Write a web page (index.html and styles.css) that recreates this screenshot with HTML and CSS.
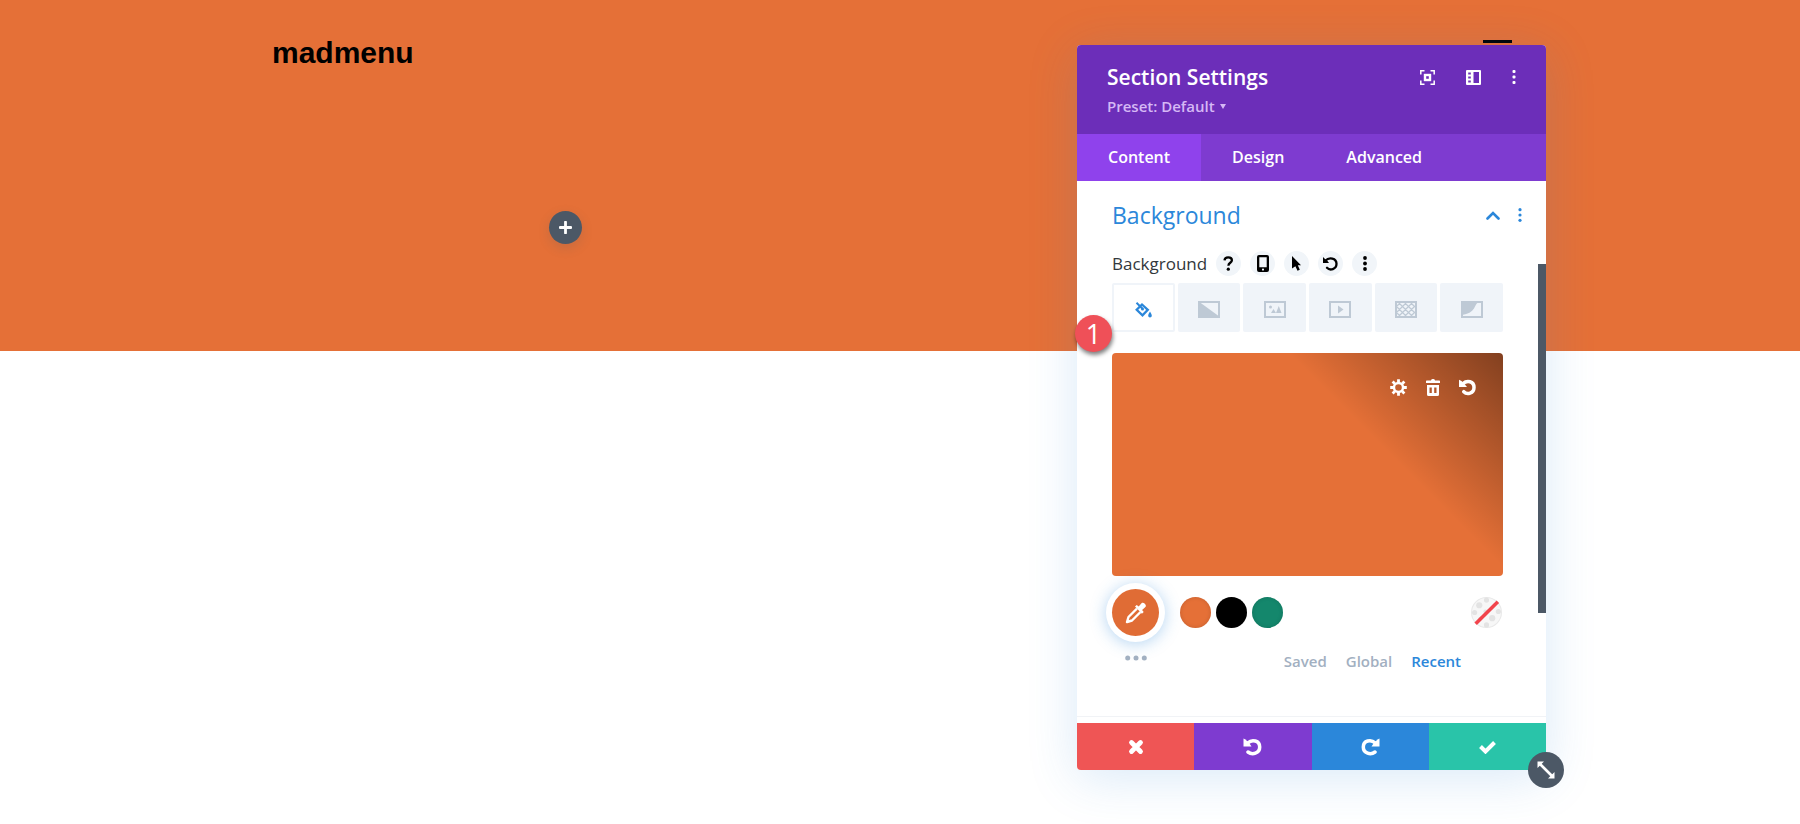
FILE: index.html
```
<!DOCTYPE html>
<html lang="en">
<head>
    <meta charset="UTF-8">
    <meta name="viewport" content="width=device-width, initial-scale=1.0">
    <title>madmenu</title>
    <link rel="stylesheet" href="styles.css">
</head>
<body>
    <section class="hero">
        <header class="topbar">
            <a class="logo" href="#">madmenu</a>
            <button class="hamburger" aria-label="Menu"></button>
        </header>
        <div class="columns">
            <div class="column">
                <button class="add" aria-label="Add module">
                    <svg width="13" height="13" viewBox="0 0 12 12"><path d="M6 1v10M1 6h10" stroke="#fff" stroke-width="2.6" stroke-linecap="round"/></svg>
                </button>
            </div>
        </div>
    </section>

    <div class="modal">
        <div class="modal-header">
            <div>
                <h2 class="modal-title">Section Settings</h2>
                <button class="preset">Preset: Default <svg width="6" height="5" viewBox="0 0 6 5"><path d="M0 0h6L3 5z" fill="currentColor"/></svg></button>
            </div>
            <div class="header-icons">
                <button class="icon" aria-label="Focus">
                    <svg width="15" height="15" viewBox="0 0 15 15" fill="none" stroke="#fff"><path d="M.8 4.5V.8h3.7M10.5 .8h3.7v3.7M14.2 10.5v3.7h-3.7M4.5 14.2H.8v-3.7" stroke-width="1.5"/><rect x="5" y="5" width="5" height="5" stroke-width="2.4"/></svg>
                </button>
                <button class="icon" aria-label="Snap to side">
                    <svg width="15" height="15" viewBox="0 0 15 15"><path fill="#fff" fill-rule="evenodd" d="M1 0h13a1 1 0 0 1 1 1v13a1 1 0 0 1-1 1H1a1 1 0 0 1-1-1V1a1 1 0 0 1 1-1zM7.5 2v11H13V2zM2.200 2.500v2h2.600v-2zM2.200 6.500v2h2.600v-2zM2.200 10.500v2h2.600v-2z"/></svg>
                </button>
                <button class="icon" aria-label="More">
                    <svg width="4" height="14" viewBox="0 0 4 14" fill="#fff"><rect x=".5" y="0" width="3" height="3" rx="1"/><rect x=".5" y="5.5" width="3" height="3" rx="1"/><rect x=".5" y="11" width="3" height="3" rx="1"/></svg>
                </button>
            </div>
        </div>

        <div class="tabs" role="tablist">
            <button class="tab active" role="tab" aria-selected="true">Content</button>
            <button class="tab" role="tab">Design</button>
            <button class="tab" role="tab">Advanced</button>
        </div>

        <div class="modal-body">
            <div class="group-head">
                <h3 class="group-title">Background</h3>
                <button class="icon" aria-label="Collapse">
                    <svg width="14" height="9" viewBox="0 0 14 9"><path d="M1.500 7.500l5.500-5.500 5.500 5.500" fill="none" stroke="#2b87da" stroke-width="2.6" stroke-linecap="round"/></svg>
                </button>
                <button class="icon" aria-label="More">
                    <svg width="4" height="14" viewBox="0 0 4 14" fill="#2b87da"><circle cx="2" cy="1.7" r="1.6"/><circle cx="2" cy="7" r="1.6"/><circle cx="2" cy="12.3" r="1.6"/></svg>
                </button>
            </div>

            <div class="field">
                <div class="field-label">
                    <span class="field-name">Background</span>
                    <button class="round" aria-label="Help">
                        <svg width="11" height="15" viewBox="0 0 11 15"><path d="M1.5 4.3C1.7 2.4 3.2 1.3 5.2 1.3c2.2 0 3.7 1.1 3.7 3 0 2.5-3.5 2.5-3.5 5.4" fill="none" stroke="#000" stroke-width="2.3"/><circle cx="5.3" cy="13.2" r="1.6"/></svg>
                    </button>
                    <button class="round" aria-label="Responsive">
                        <svg width="12" height="17" viewBox="0 0 12 17"><path fill-rule="evenodd" d="M2 0h8a2 2 0 0 1 2 2v13a2 2 0 0 1-2 2H2a2 2 0 0 1-2-2V2a2 2 0 0 1 2-2zM2.3 2.3v10h7.4v-10zM6 13.5a1.1 1.1 0 1 0 0 2.2 1.1 1.1 0 0 0 0-2.2z"/></svg>
                    </button>
                    <button class="round" aria-label="Hover">
                        <svg width="9" height="15" viewBox="0 0 9 15"><path d="M0 0l9 9.2H5.8l2 4.5-2.3 1.1-2.1-4.6L0 12.5z"/></svg>
                    </button>
                    <button class="round" aria-label="Reset">
                        <svg width="15" height="15" viewBox="0 0 15 15"><path d="M2.500 4.500C6 .8 13.500 1.800 13.500 7.800c0 5.500-6.500 7.200-9.500 4" fill="none" stroke="#000" stroke-width="2.300" stroke-linecap="round"/><path d="M0 1v6h6L4.500 5 2 3z"/></svg>
                    </button>
                    <button class="round" aria-label="Options">
                        <svg width="4" height="15" viewBox="0 0 4 15"><circle cx="2" cy="2" r="1.9"/><circle cx="2" cy="7.5" r="1.9"/><circle cx="2" cy="13" r="1.9"/></svg>
                    </button>
                </div>

                <div class="types">
                    <button class="type active" aria-label="Color">
                        <svg width="17" height="16" viewBox="0 0 17 16"><path d="M7 2.500l5.800 5.300-5.300 5.500-5.800-5.500z" fill="none" stroke="#2b87da" stroke-width="2.300"/><path d="M1.500 .8l6 6" stroke="#2b87da" stroke-width="2"/><circle cx="7.500" cy="7" r="1.500" fill="#2b87da"/><path d="M15 9.500c1 1.700 1.800 3 1.800 4.200a1.800 1.800 0 0 1-3.600 0c0-1.200.8-2.500 1.800-4.200z" fill="#2b87da"/></svg>
                    </button>
                    <button class="type" aria-label="Gradient">
                        <svg width="22" height="17" viewBox="0 0 22 17"><rect x="1" y="1" width="20" height="15" fill="none" stroke="#bec9d5" stroke-width="2"/><path d="M0 0l22 16v1H0z" fill="#bec9d5"/></svg>
                    </button>
                    <button class="type" aria-label="Image">
                        <svg width="22" height="17" viewBox="0 0 22 17"><rect x="1" y="1" width="20" height="15" fill="none" stroke="#bec9d5" stroke-width="2"/><circle cx="6.5" cy="6" r="1.5" fill="#bec9d5"/><path d="M7 12l2.5-4 2.5 4zM12 12l2.8-7L17.5 12z" fill="#bec9d5"/></svg>
                    </button>
                    <button class="type" aria-label="Video">
                        <svg width="22" height="17" viewBox="0 0 22 17"><rect x="1" y="1" width="20" height="15" fill="none" stroke="#bec9d5" stroke-width="2"/><path d="M9 4.5l5.5 4-5.5 4z" fill="#bec9d5"/></svg>
                    </button>
                    <button class="type" aria-label="Pattern">
                        <svg width="22" height="17" viewBox="0 0 22 17"><rect x="1" y="1" width="20" height="15" fill="none" stroke="#bec9d5" stroke-width="2"/><path d="M2 5l3-3M2 11l9-9M4 15L17 2M10 15l10-10M16 15l4-4M2 12l3 3M2 6l9 9M4 2l13 13M10 2l10 10M16 2l4 4" fill="none" stroke="#bec9d5" stroke-width="1.200"/></svg>
                    </button>
                    <button class="type" aria-label="Mask">
                        <svg width="22" height="17" viewBox="0 0 22 17"><rect x="1" y="1" width="20" height="15" fill="none" stroke="#bec9d5" stroke-width="2"/><path d="M1 1h18c-3.500 0-4 3-6 6.500S7 13 1 14z" fill="#bec9d5"/></svg>
                    </button>
                </div>

                <div class="preview">
                    <button class="icon" aria-label="Edit color">
                        <svg width="17" height="17" viewBox="0 0 17 17" fill="none" stroke="#fff"><circle cx="8.5" cy="8.5" r="4.5" stroke-width="2.4"/><path d="M8.5 .2v3M8.5 13.800v3M.2 8.500h3M13.800 8.500h3M2.600 2.600l2.200 2.200M12.200 12.200l2.200 2.200M2.600 14.400l2.200-2.200M12.200 4.800l2.200-2.200" stroke-width="2.800"/></svg>
                    </button>
                    <button class="icon" aria-label="Delete color">
                        <svg width="14" height="17" viewBox="0 0 14 17" fill="#fff"><path d="M5 1.500A1.500 1.500 0 0 1 6.500 0h1A1.500 1.500 0 0 1 9 1.500h4.300a.7.7 0 0 1 .7.700V4H0V2.200a.7.7 0 0 1 .7-.700z"/><path fill-rule="evenodd" d="M1 6h12v9.500a1.500 1.500 0 0 1-1.500 1.500h-9A1.500 1.500 0 0 1 1 15.500zM3.500 8.500V14H5.800V8.500zM8.200 8.500V14h2.300V8.500z"/></svg>
                    </button>
                    <button class="icon" aria-label="Reset color">
                        <svg width="17" height="17" viewBox="0 0 17 17"><path d="M4 4.5C8 1 15 2 15 8.5c0 6-7 7.500-10.200 4.200" fill="none" stroke="#fff" stroke-width="3.500" stroke-linecap="round"/><path d="M0 .8V8h8L6 5.500 2.500 2z" fill="#fff"/></svg>
                    </button>
                </div>

                <div class="palette">
                    <div class="picker">
                        <button class="picker-button" aria-label="Pick a color">
                            <svg width="22" height="22" viewBox="0 0 22 22"><path d="M12 6.5L3.500 15 2 20l5-1.500L15.500 10" fill="none" stroke="#fff" stroke-width="2.400" stroke-linejoin="round"/><path d="M10 4.500l1.700-1.600 2 1.600 2.800-3.300c1.700-1.700 5.800 1.500 3.900 3.900l-3.300 3 1.600 1.900-1.800 1.800z" fill="#fff"/></svg>
                        </button>
                        <button class="icon" aria-label="More colors">
                            <svg width="22" height="6" viewBox="0 0 22 6" fill="#a2b0c1"><circle cx="2.7" cy="3" r="2.500"/><circle cx="11" cy="3" r="2.500"/><circle cx="19.300" cy="3" r="2.500"/></svg>
                        </button>
                    </div>
                    <div class="palette-main">
                        <div class="swatches">
                            <button class="swatch orange" aria-label="Orange"></button>
                            <button class="swatch black" aria-label="Black"></button>
                            <button class="swatch green" aria-label="Green"></button>
                            <button class="swatch none" aria-label="No color">
                                <svg width="31" height="31" viewBox="0 0 30 30"><circle cx="15" cy="15" r="14.500" fill="#f7f7f7" stroke="#e9e9e9"/><g fill="#e3e3e3"><circle cx="8" cy="8" r="3"/><circle cx="15" cy="3" r="2.500"/><circle cx="3.500" cy="15" r="2.500"/><circle cx="9" cy="21" r="2"/><circle cx="15" cy="27" r="2.500"/><circle cx="20.500" cy="20.500" r="3"/><circle cx="26.500" cy="14" r="2.500"/><circle cx="14" cy="14" r="2"/></g><path d="M4.500 26L26 4.500" stroke="#f2444c" stroke-width="3.400"/></svg>
                            </button>
                        </div>
                        <div class="palette-tabs">
                            <button class="palette-tab">Saved</button>
                            <button class="palette-tab">Global</button>
                            <button class="palette-tab active">Recent</button>
                        </div>
                    </div>
                </div>
            </div>
            <div class="scrollbar"></div>
        </div>

        <div class="actions">
            <button class="action discard" aria-label="Discard">
                <svg width="16" height="16" viewBox="0 0 16 16"><path d="M3.5 3.5l9 9M12.500 3.500l-9 9" stroke="#fff" stroke-width="4.800" stroke-linecap="round"/></svg>
            </button>
            <button class="action undo" aria-label="Undo">
                <svg width="19" height="18" viewBox="0 0 19 18"><path d="M5 4.800C9 1 16.700 2.500 16.700 9c0 6.500-7.500 8.300-11.700 5" fill="none" stroke="#fff" stroke-width="3.500" stroke-linecap="round"/><path d="M.5 .5V8.500h8L6.500 5.500 2.500 1.500z" fill="#fff"/></svg>
            </button>
            <button class="action redo" aria-label="Redo">
                <svg width="19" height="18" viewBox="0 0 19 18"><path d="M14 4.800C10 1 2.300 2.500 2.300 9c0 6.500 7.500 8.300 11.700 5" fill="none" stroke="#fff" stroke-width="3.500" stroke-linecap="round"/><path d="M18.500 .5V8.500h-8L12.500 5.500 16.500 1.500z" fill="#fff"/></svg>
            </button>
            <button class="action save" aria-label="Save">
                <svg width="17" height="14" viewBox="0 0 17 14"><path d="M1.500 6.500l5 5L15.500 2.500" fill="none" stroke="#fff" stroke-width="4"/></svg>
            </button>
        </div>

        <span class="step">1</span>
        <button class="resize" aria-label="Resize">
            <svg width="18" height="18" viewBox="0 0 18 18"><path d="M3 3l12 12" stroke="#fff" stroke-width="2.600"/><path d="M.5 .5h6.500l-6.500 6.500zM17.500 17.500h-6.500l6.500-6.500z" fill="#fff"/></svg>
        </button>
    </div>
</body>
</html>
```
FILE: styles.css
```
*
{
    box-sizing: border-box;
}
body
{
    margin: 0;
    min-height: 100vh;
    position: relative;
    background-color: #fff;
    font-family: "Open Sans", sans-serif;
}
button
{
    margin: 0;
    padding: 0;
    border: 0;
    background: none;
    font: inherit;
    color: inherit;
    cursor: pointer;
}
svg
{
    display: block;
}
h2, h3
{
    margin: 0;
}
.icon
{
    display: flex;
}

/* page behind the modal */
.hero
{
    padding: 34px 15% 107px;
    background-color: #e57037;
}
.topbar
{
    display: flex;
    justify-content: space-between;
    align-items: flex-start;
    padding: 0 18px 0 2px;
}
.logo
{
    color: #000;
    font-family: "Liberation Sans", Arial, sans-serif;
    font-size: 30px;
    line-height: 37px;
    font-weight: bold;
    text-decoration: none;
}
.hamburger
{
    width: 29px;
    height: 19px;
    margin-top: 6px;
    border-top: 3px solid #000;
    border-bottom: 3px solid #000;
}
.columns
{
    display: grid;
    grid-template-columns: 1fr 1fr;
    column-gap: 78px;
    padding-top: 140px;
}
.column
{
    display: flex;
    justify-content: center;
}
.add
{
    display: flex;
    align-items: center;
    justify-content: center;
    width: 33px;
    height: 33px;
    border-radius: 50%;
    background-color: #4c5866;
    box-shadow: 0 4px 12px rgba(76, 88, 102, 0.2);
}

/* modal */
.modal
{
    position: absolute;
    top: 45px;
    right: 254px;
    width: 469px;
    border-radius: 4px;
    background-color: #fff;
    box-shadow: 0 8px 50px rgba(43, 135, 218, 0.18);
}
.modal-header
{
    display: flex;
    justify-content: space-between;
    padding: 17px 30px 15px;
    border-radius: 4px 4px 0 0;
    background-color: #6c2eb9;
    color: #fff;
}
.modal-title
{
    font-size: 21px;
    line-height: 30px;
    font-weight: 600;
}
.preset
{
    display: flex;
    align-items: center;
    gap: 5px;
    padding-top: 2px;
    color: #d5b8f5;
    font-size: 15px;
    line-height: 25px;
    font-weight: 600;
}
.header-icons
{
    display: flex;
    align-items: center;
    gap: 31px;
    height: 30px;
}
.tabs
{
    display: flex;
    background-color: #7e3bd0;
}
.tab
{
    padding: 0 31px;
    color: #fff;
    font-size: 16px;
    line-height: 47px;
    font-weight: 600;
}
.tab.active
{
    background-color: #8f42ec;
}
.modal-body
{
    position: relative;
    padding-bottom: 6px;
}
.group-head
{
    display: flex;
    align-items: center;
    gap: 18px;
    padding: 16px 24px 16px 35px;
}
.group-title
{
    flex: 1;
    color: #2b87da;
    font-size: 23px;
    line-height: 36px;
    font-weight: 400;
}
.field
{
    padding: 0 43px 0 35px;
    border-bottom: 1px solid #f1f3f6;
}
.field-label
{
    display: flex;
    align-items: center;
    gap: 9px;
    height: 28px;
}
.field-name
{
    color: #32373c;
    font-size: 17px;
}
.round
{
    display: flex;
    align-items: center;
    justify-content: center;
    width: 25px;
    height: 25px;
    border-radius: 50%;
    background-color: #f1f5f9;
}
.types
{
    display: grid;
    grid-template-columns: repeat(6, 1fr);
    gap: 3px;
    padding-top: 6px;
}
.type
{
    display: flex;
    align-items: center;
    justify-content: center;
    height: 49px;
    padding-top: 4px;
    border-radius: 2px;
    background-color: #f0f4f9;
}
.type.active
{
    border: 2px solid #f0f4f9;
    background-color: #fff;
}
.preview
{
    display: flex;
    justify-content: flex-end;
    align-items: flex-start;
    gap: 19px;
    height: 223px;
    margin-top: 21px;
    padding: 26px 27px;
    border-radius: 4px;
    background-color: #e57037;
    background-image: linear-gradient(45deg, rgba(0, 0, 0, 0) 65%, rgba(0, 0, 0, 0.43));
}
.palette
{
    display: flex;
    gap: 21px;
    padding: 13px 1px 43px 0;
}
.picker
{
    display: flex;
    flex-direction: column;
    align-items: center;
    gap: 19px;
}
.picker-button
{
    display: flex;
    align-items: center;
    justify-content: center;
    width: 47px;
    height: 47px;
    border-radius: 50%;
    background-color: #e06c35;
    box-shadow: 0 0 0 6px #fff, 0 2px 16px 6px rgba(43, 135, 218, 0.35);
}
.palette-main
{
    flex: 1;
    padding-top: 8px;
}
.swatches
{
    display: flex;
    gap: 5px;
}
.swatch
{
    width: 31px;
    height: 31px;
    border-radius: 50%;
    box-shadow: inset 0 0 4px rgba(0, 0, 0, 0.15);
}
.orange
{
    background-color: #e57037;
}
.black
{
    background-color: #000;
}
.green
{
    background-color: #14876c;
}
.none
{
    margin-left: auto;
    box-shadow: none;
}
.palette-tabs
{
    display: flex;
    justify-content: flex-end;
    gap: 19px;
    padding: 21px 41px 0 0;
}
.palette-tab
{
    color: #a2b0c1;
    font-size: 15px;
    line-height: 24px;
    font-weight: 600;
}
.palette-tab.active
{
    color: #2b87da;
}
.scrollbar
{
    position: absolute;
    top: 83px;
    right: 0;
    width: 8px;
    height: 349px;
    background-color: #4c5866;
}
.actions
{
    display: grid;
    grid-template-columns: repeat(4, 1fr);
    border-radius: 0 0 4px 4px;
    overflow: hidden;
}
.action
{
    display: flex;
    align-items: center;
    justify-content: center;
    height: 47px;
}
.discard
{
    background-color: #ef5555;
}
.undo
{
    background-color: #7e3bd0;
}
.redo
{
    background-color: #2b87da;
}
.save
{
    background-color: #29c4a9;
}

/* on top of the modal edges */
.step
{
    position: absolute;
    top: 270px;
    left: -2px;
    width: 37px;
    height: 37px;
    border-radius: 50%;
    background-color: #ef5058;
    box-shadow: 1px 3px 4px rgba(0, 0, 0, 0.5);
    color: #fff;
    font-size: 27px;
    line-height: 38px;
    text-align: center;
}
.resize
{
    position: absolute;
    right: -18px;
    bottom: -18px;
    display: flex;
    align-items: center;
    justify-content: center;
    width: 36px;
    height: 36px;
    border-radius: 50%;
    background-color: #4c5866;
}
```
